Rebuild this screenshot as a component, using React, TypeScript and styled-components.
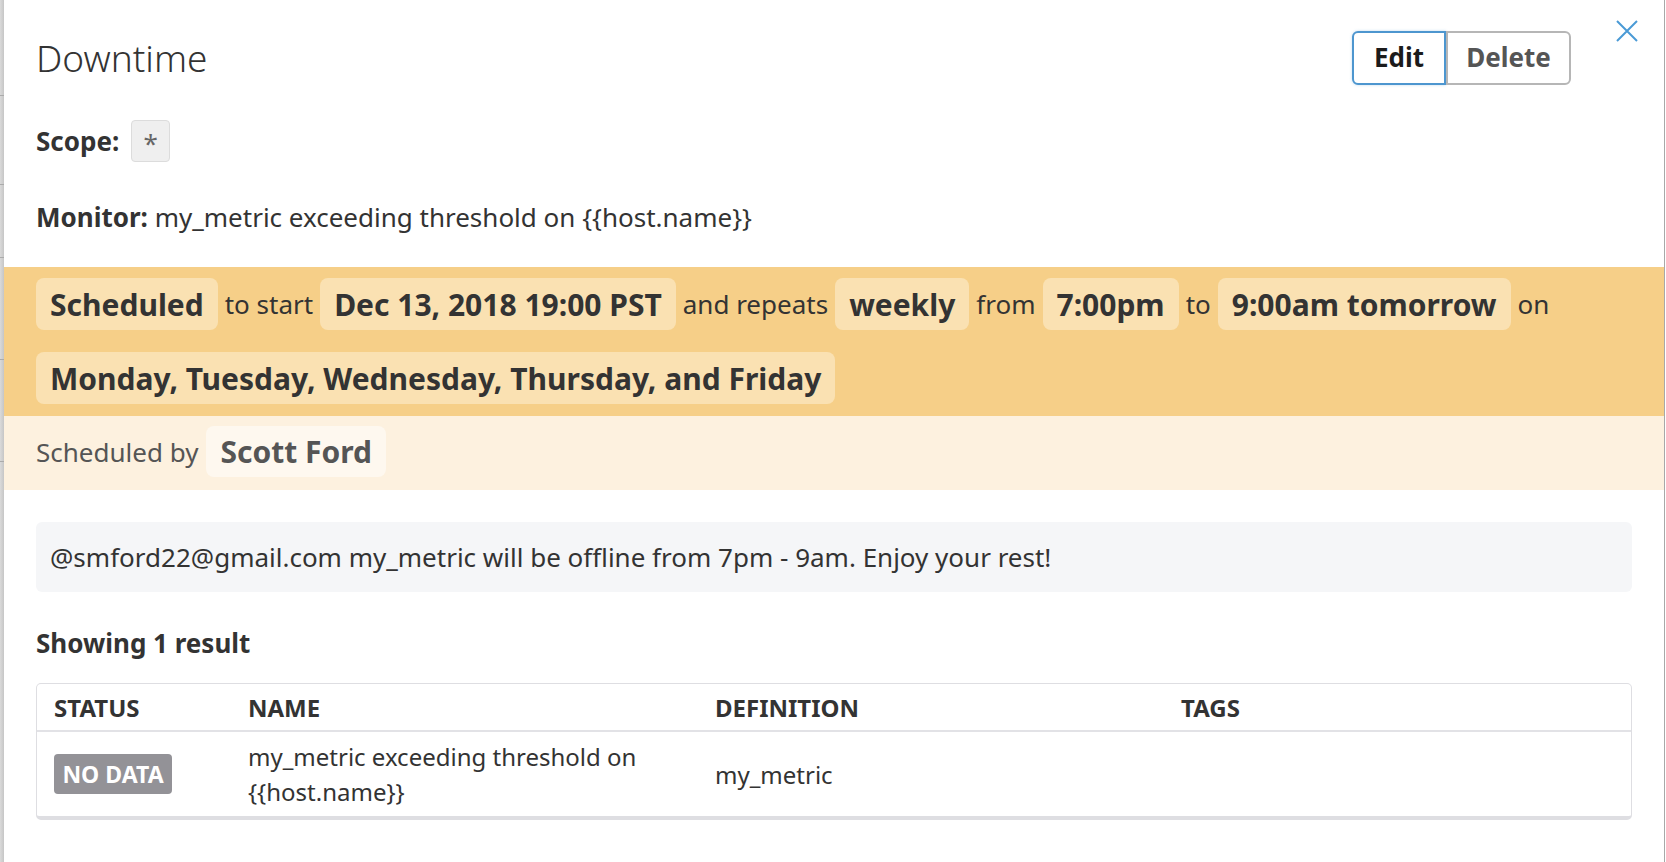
import React from "react";
import styled, { createGlobalStyle } from "styled-components";

const Global = createGlobalStyle`
  html, body { margin: 0; padding: 0; background: #fff; }
  body { font-family: "Noto Sans", "Open Sans", sans-serif; color: #333; }
  * { box-sizing: border-box; }
`;

const Page = styled.div`
  display: flex;
  width: 1666px;
  height: 862px;
  overflow: hidden;
  background: #fff;
`;

const Backdrop = styled.div`
  width: 4px;
  flex: none;
  display: flex;
  flex-direction: column;
  background: linear-gradient(to right, #dadada, #c6c6c6);
`;

const BackRow = styled.div<{ $h: number }>`
  height: ${(p) => p.$h}px;
  flex: none;
  border-bottom: 1px solid #ababab;
`;

const Modal = styled.div`
  width: 1660px;
  flex: none;
  display: flex;
  flex-direction: column;
  background: #fff;
`;

const RightEdge = styled.div`
  width: 2px;
  flex: none;
  border-left: 1px solid #a8a8a8;
  background: #fff;
`;

const Header = styled.header`
  display: flex;
  align-items: flex-start;
  padding: 20px 26px 0 32px;
`;

const Title = styled.h1`
  flex: 1;
  margin: 16px 0 0;
  font-size: 37px;
  font-weight: 300;
  line-height: 44px;
  color: #333;
`;

const Actions = styled.div`
  display: flex;
  margin-top: 11px;
`;

const ActionButton = styled.button<{ $primary?: boolean }>`
  height: 54px;
  width: ${(p) => (p.$primary ? 94 : 125)}px;
  padding: 0 0 2px;
  font-family: "Noto Sans", sans-serif;
  font-weight: 700;
  font-size: 26px;
  background: #fff;
  border: 2px solid ${(p) => (p.$primary ? "#4d96cf" : "#b6b6b6")};
  color: ${(p) => (p.$primary ? "#1b1b1b" : "#555")};
  border-radius: ${(p) => (p.$primary ? "6px 0 0 6px" : "0 6px 6px 0")};
  ${(p) => (p.$primary ? "box-shadow: 0 0 3px rgba(77,150,207,0.35);" : "")}
`;

const CloseButton = styled.button`
  margin-left: 45px;
  width: 22px;
  height: 22px;
  padding: 0;
  border: 0;
  background: none;
  display: flex;
`;

const Field = styled.div<{ $gap: number }>`
  display: flex;
  align-items: center;
  gap: 12px;
  margin: ${(p) => p.$gap}px 32px 0;
  font-size: 26px;
  line-height: 36px;
  color: #333;
`;

const Label = styled.span`
  font-weight: 700;
`;

const ScopeTag = styled.span`
  display: inline-flex;
  align-items: center;
  justify-content: center;
  width: 39px;
  height: 42px;
  padding-top: 4px;
  background: #efefef;
  border: 1px solid #dcdcdc;
  border-radius: 4px;
  color: #666;
  font-size: 26px;
`;

const ScheduleBand = styled.section`
  display: flex;
  flex-wrap: wrap;
  align-items: center;
  column-gap: 7px;
  row-gap: 22px;
  margin-top: 32px;
  padding: 11px 32px 12px;
  background: #f6cf88;
  font-size: 26px;
  color: #333;
`;

const AuthorBand = styled.section`
  display: flex;
  align-items: center;
  gap: 8px;
  padding: 10px 32px 13px;
  background: #fdf1df;
  font-size: 26px;
  color: #555;
`;

const Chip = styled.span<{ $soft?: boolean }>`
  display: inline-flex;
  align-items: center;
  height: ${(p) => (p.$soft ? 51 : 52)}px;
  padding: 0 14px;
  border-radius: 8px;
  font-weight: 700;
  font-size: 30px;
  background: ${(p) => (p.$soft ? "#fef8ef" : "#fae1b2")};
  color: ${(p) => (p.$soft ? "#555" : "#333")};
`;

const Word = styled.span`
  line-height: 52px;
`;

const Message = styled.div`
  display: flex;
  align-items: center;
  height: 70px;
  margin: 32px 32px 0;
  padding: 0 14px;
  background: #f5f6f8;
  border-radius: 6px;
  font-size: 26px;
  color: #333;
`;

const ResultCount = styled.div`
  margin: 36px 32px 0;
  font-size: 26px;
  line-height: 30px;
  font-weight: 700;
  color: #333;
`;

const Table = styled.table`
  margin: 25px 32px 0;
  width: 1596px;
  border-collapse: separate;
  border-spacing: 0;
  border: 1px solid #dedee2;
  border-bottom-width: 4px;
  border-radius: 5px;
  table-layout: fixed;
`;

const Th = styled.th<{ $w?: number }>`
  ${(p) => (p.$w ? `width: ${p.$w}px;` : "")}
  height: 48px;
  padding: 0 17px;
  text-align: left;
  font-size: 24px;
  font-weight: 700;
  color: #333;
  border-bottom: 2px solid #e2e2e6;
`;

const Td = styled.td`
  padding: 7px 17px;
  vertical-align: middle;
  font-size: 24px;
  line-height: 35px;
  color: #333;
`;

const StatusBadge = styled.span`
  display: inline-flex;
  align-items: center;
  justify-content: center;
  width: 118px;
  height: 40px;
  background: #939297;
  border-radius: 4px;
  color: #fff;
  font-weight: 700;
  font-size: 23px;
`;

const schedule: Array<{ t: string; chip?: boolean }> = [
  { t: "Scheduled", chip: true },
  { t: "to start" },
  { t: "Dec 13, 2018 19:00 PST", chip: true },
  { t: "and repeats" },
  { t: "weekly", chip: true },
  { t: "from" },
  { t: "7:00pm", chip: true },
  { t: "to" },
  { t: "9:00am tomorrow", chip: true },
  { t: "on" },
  { t: "Monday, Tuesday, Wednesday, Thursday, and Friday", chip: true },
];

export default function App() {
  return (
    <>
      <Global />
      <Page>
        <Backdrop>
          <BackRow $h={96} />
          <BackRow $h={89} />
          <BackRow $h={73} />
          <BackRow $h={102} />
          <BackRow $h={102} />
        </Backdrop>
        <Modal>
          <Header>
            <Title>Downtime</Title>
            <Actions>
              <ActionButton $primary>Edit</ActionButton>
              <ActionButton>Delete</ActionButton>
            </Actions>
            <CloseButton aria-label="Close">
              <svg width="22" height="22" viewBox="0 0 22 22">
                <path d="M1 1 L21 21 M21 1 L1 21" stroke="#4a9ad6" strokeWidth="2" fill="none" />
              </svg>
            </CloseButton>
          </Header>

          <Field $gap={35}>
            <Label>Scope:</Label>
            <ScopeTag>*</ScopeTag>
          </Field>
          <Field $gap={37}>
            <span>
              <Label>Monitor:</Label> my_metric exceeding threshold on {"{{host.name}}"}
            </span>
          </Field>

          <ScheduleBand>
            {schedule.map((s, i) =>
              s.chip ? <Chip key={i}>{s.t}</Chip> : <Word key={i}>{s.t}</Word>
            )}
          </ScheduleBand>
          <AuthorBand>
            <span>Scheduled by</span>
            <Chip $soft>Scott Ford</Chip>
          </AuthorBand>

          <Message>@smford22@gmail.com my_metric will be offline from 7pm - 9am. Enjoy your rest!</Message>

          <ResultCount>Showing 1 result</ResultCount>

          <Table>
            <thead>
              <tr>
                <Th $w={194}>STATUS</Th>
                <Th $w={467}>NAME</Th>
                <Th $w={466}>DEFINITION</Th>
                <Th>TAGS</Th>
              </tr>
            </thead>
            <tbody>
              <tr>
                <Td>
                  <StatusBadge>NO DATA</StatusBadge>
                </Td>
                <Td>
                  my_metric exceeding threshold on
                  <br />
                  {"{{host.name}}"}
                </Td>
                <Td>my_metric</Td>
                <Td />
              </tr>
            </tbody>
          </Table>
        </Modal>
        <RightEdge />
      </Page>
    </>
  );
}
